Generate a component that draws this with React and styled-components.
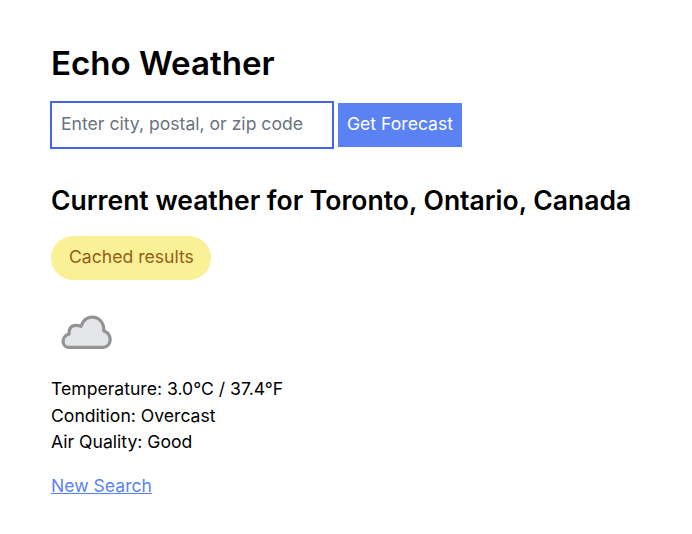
import React from "react";
import styled, { createGlobalStyle } from "styled-components";

const GlobalStyle = createGlobalStyle`
  *, *::before, *::after { box-sizing: border-box; }
  body {
    margin: 0;
    background: #fff;
    color: #000;
    font-family: Inter, sans-serif;
    font-size: 17.6px;
    line-height: 26.4px;
  }
`;

const Page = styled.main`
  display: flex;
  flex-direction: column;
  align-items: flex-start;
  padding: 43px 51px 0;
`;

const Title = styled.h1`
  margin: 0;
  font-size: 33.1px;
  font-weight: 620;
  line-height: 40px;
`;

const SearchForm = styled.form`
  display: flex;
  gap: 4px;
  margin-top: 18px;
`;

const SearchInput = styled.input`
  width: 284px;
  height: 48px;
  margin-left: -1px;
  padding: 0 9px 3px;
  border: 2px solid #4364e8;
  border-radius: 0;
  outline: 0;
  font: inherit;
  &::placeholder { color: #6b7280; opacity: 1; }
`;

const SubmitButton = styled.button`
  width: 124px;
  height: 44px;
  margin-top: 2px;
  padding: 0 0 2px;
  border: 0;
  background: #5b82f3;
  color: #fff;
  font: inherit;
`;

const Heading = styled.h2`
  margin: 33px 0 0;
  font-size: 26.5px;
  font-weight: 600;
  line-height: 36px;
  white-space: nowrap;
`;

const Badge = styled.span`
  width: 160px;
  height: 44px;
  margin-top: 18px;
  padding: 8px 0 0 18px;
  border-radius: 22px;
  background: #faf096;
  color: #935c18;
`;

const CloudIcon = styled.svg`
  width: 70px;
  height: 70px;
  margin-top: 17px;
`;

const Readings = styled.div`
  margin-top: 9.4px;
`;

const SearchLink = styled.a`
  margin-top: 17.4px;
  color: #5b82f3;
  text-decoration: underline;
`;

export default function App() {
  return (
    <>
      <GlobalStyle />
      <Page>
        <Title>Echo Weather</Title>
        <SearchForm>
          <SearchInput placeholder="Enter city, postal, or zip code" />
          <SubmitButton type="button">Get Forecast</SubmitButton>
        </SearchForm>
        <Heading>Current weather for Toronto, Ontario, Canada</Heading>
        <Badge>Cached results</Badge>
        <CloudIcon viewBox="0 0 70 70" role="img" aria-label="Overcast">
          <path
            d="M18 50.3 C14.5 50.3 12.1 47.6 12.1 44.4 C12.1 40.8 14.5 37.8 18 37.2 C17.6 32 20.2 28.3 24.5 28.3 C26.5 28.3 28.2 28.6 30 29.3 C32.2 23 35.8 20.2 41 20.2 C48.2 20.2 53.2 25.8 52.8 33.9 C56.7 35.2 59.2 38.7 59.2 42.6 C59.2 46.8 56.3 50.3 52.5 50.3 Z"
            fill="#e5e6e9"
            stroke="#939393"
            strokeWidth="3.2"
            strokeLinejoin="round"
          />
        </CloudIcon>
        <Readings>
          <div>Temperature: 3.0°C / 37.4°F</div>
          <div>Condition: Overcast</div>
          <div>Air Quality: Good</div>
        </Readings>
        <SearchLink href="#">New Search</SearchLink>
      </Page>
    </>
  );
}
